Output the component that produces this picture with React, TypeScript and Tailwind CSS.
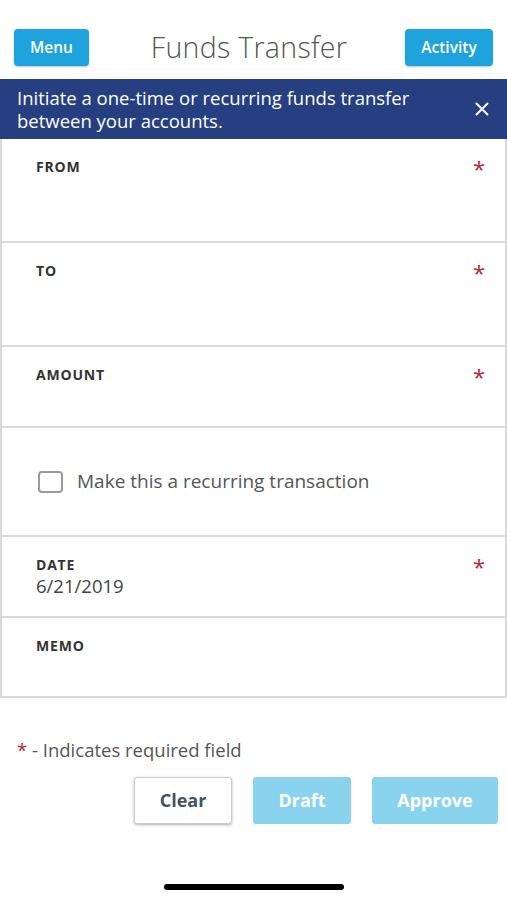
import React from 'react';

const Field: React.FC<{ label: string; required?: boolean; value?: string; height: string }> = ({ label, required, value, height }) => {
  return (
    <div className={`flex justify-between border-b-2 border-[#d9d9d9] pl-[34px] pr-[20px] pt-[19px] ${height}`}>
      <div>
        <div className="text-[14px] font-bold leading-[18px] tracking-[0.8px] text-[#333]">{label}</div>
        {value && <div className="mt-[1px] text-[18.5px] leading-[22px] text-[#444]">{value}</div>}
      </div>
      {required && <span className="mt-[-2px] text-[22px] leading-[24px] text-[#b3282d]">*</span>}
    </div>
  );
};

export default function App() {
  return (
    <div className="w-[507px] h-[900px] bg-white font-['Open_Sans',sans-serif] overflow-hidden">
      {/* Header */}
      <div className="flex h-[79px] items-start justify-between px-[14px] pt-[29px]">
        <button className="h-[37px] w-[75px] rounded-[4px] bg-[#1ea3dc] text-[15.5px] font-semibold text-white shadow-[0_1px_2px_rgba(0,0,0,0.25)]">
          Menu
        </button>
        <h1 className="ml-[4px] text-[28.5px] font-light leading-[37px] text-[#555] tracking-[0.3px]">Funds Transfer</h1>
        <button className="h-[37px] w-[88px] rounded-[4px] bg-[#1ea3dc] text-[15.5px] font-semibold text-white shadow-[0_1px_2px_rgba(0,0,0,0.25)]">
          Activity
        </button>
      </div>

      {/* Info banner */}
      <div className="flex h-[60px] items-center justify-between bg-[#253f80] pl-[17px] pr-[16px]">
        <p className="text-[18.5px] leading-[23px] text-white">
          Initiate a one-time or recurring funds transfer
          <br />
          between your accounts.
        </p>
        <svg width="14" height="14" viewBox="0 0 14 14" className="mr-[2px]">
          <path d="M1.5 1.5L12.5 12.5M12.5 1.5L1.5 12.5" stroke="white" strokeWidth="2" strokeLinecap="round" />
        </svg>
      </div>

      {/* Form */}
      <div className="border-x-2 border-[#d9d9d9]">
        <Field label="FROM" required height="h-[104px]" />
        <Field label="TO" required height="h-[104px]" />
        <Field label="AMOUNT" required height="h-[81px]" />
        <div className="flex h-[109px] items-center gap-[14px] border-b-2 border-[#d9d9d9] pl-[36px]">
          <span className="h-[22px] w-[25px] rounded-[4px] border-2 border-[#9a9a9a] bg-white"></span>
          <span className="text-[19px] text-[#555]">Make this a recurring transaction</span>
        </div>
        <Field label="DATE" required value="6/21/2019" height="h-[81px]" />
        <Field label="MEMO" height="h-[80px]" />
      </div>

      {/* Footer */}
      <p className="mt-[40px] pl-[17px] text-[18.5px] leading-[24px] text-[#555]">
        <span className="text-[#b3282d]">*</span> - Indicates required field
      </p>
      <div className="mt-[15px] flex justify-end gap-[21px] pr-[9px]">
        <button className="h-[47px] w-[98px] rounded-[3px] border border-[#ccc] bg-white text-[18px] font-bold text-[#3d5560] shadow-[0_1px_3px_rgba(0,0,0,0.3)]">
          Clear
        </button>
        <button className="h-[47px] w-[98px] rounded-[3px] bg-[#8ad3ef] text-[18px] font-bold text-white">
          Draft
        </button>
        <button className="h-[47px] w-[126px] rounded-[3px] bg-[#8ad3ef] text-[18px] font-bold text-white">
          Approve
        </button>
      </div>

      {/* Home indicator */}
      <div className="mt-[60px] flex justify-center">
        <div className="h-[6px] w-[180px] rounded-full bg-black"></div>
      </div>
    </div>
  );
}
